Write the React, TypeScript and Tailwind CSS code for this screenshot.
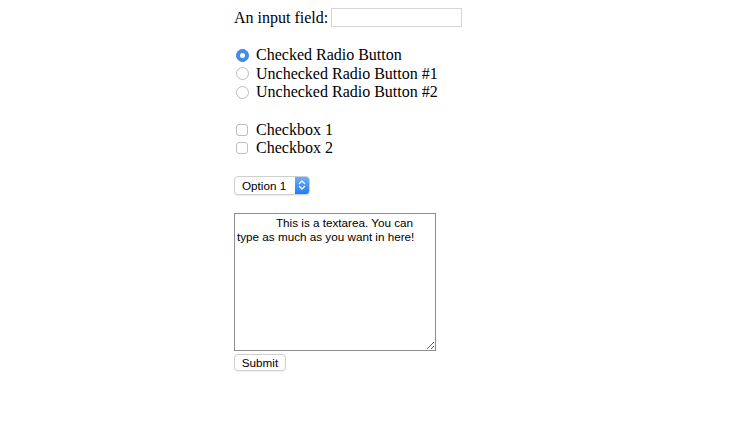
import { useState } from 'react';

const serif = 'font-["Liberation_Serif","Times_New_Roman",serif]';
const sans = 'font-["Liberation_Sans",Arial,sans-serif]';

function Radio({ checked, label }: { checked?: boolean; label: string }) {
  return (
    <label className="flex items-center h-[18.5px]">
      <span
        className={
          checked
            ? 'ml-[2px] w-[13px] h-[13px] rounded-full bg-[#3f8ef3] border border-[#3a86e8] flex items-center justify-center'
            : 'ml-[2px] w-[13px] h-[13px] rounded-full bg-white border border-[#bdbdbd]'
        }
      >
        {checked && <span className="w-[5px] h-[5px] rounded-full bg-white" />}
      </span>
      <span className="ml-[7px]">{label}</span>
    </label>
  );
}

function Checkbox({ label }: { label: string }) {
  return (
    <label className="flex items-center h-[18.5px]">
      <span className="ml-[2px] w-[12px] h-[12px] rounded-[3px] bg-white border border-[#bdbdbd]" />
      <span className="ml-[8px]">{label}</span>
    </label>
  );
}

export default function App() {
  const [text, setText] = useState(
    '            This is a textarea. You can type as much as you want in here!'
  );

  return (
    <div className={`min-h-[425px] bg-white text-black ${serif} text-[16px]`}>
      <div className="mx-auto w-[261px] pt-[8px] flex flex-col items-start">
        <div className="flex items-center h-[19px] leading-[19px]">
          <span>An input field:</span>
          <input
            type="text"
            className="ml-[3px] w-[131px] h-[19px] border border-[#d5d5d5] bg-white outline-none"
          />
        </div>

        <div className="mt-[19px] flex flex-col leading-[18.5px]">
          <Radio checked label="Checked Radio Button" />
          <Radio label="Unchecked Radio Button #1" />
          <Radio label="Unchecked Radio Button #2" />
        </div>

        <div className="mt-[19px] flex flex-col leading-[18.5px]">
          <Checkbox label="Checkbox 1" />
          <Checkbox label="Checkbox 2" />
        </div>

        <div className="mt-[18px] flex h-[19px] w-[76px] rounded-[4px] border border-[#cfcfcf] bg-white overflow-hidden shadow-[0_1px_1px_rgba(0,0,0,0.08)]">
          <span className={`flex-1 pl-[7px] text-[11.7px] leading-[17px] ${sans}`}>Option 1</span>
          <span className="w-[14px] h-full bg-gradient-to-b from-[#6ab0fb] to-[#1f7cf1] flex items-center justify-center">
            <svg width="8" height="12" viewBox="0 0 8 12" fill="none" stroke="white" strokeWidth="1.3" strokeLinecap="round" strokeLinejoin="round">
              <path d="M1.5 4.5 L4 2 L6.5 4.5" />
              <path d="M1.5 7.5 L4 10 L6.5 7.5" />
            </svg>
          </span>
        </div>

        <textarea
          value={text}
          onChange={(e) => setText(e.target.value)}
          spellCheck={false}
          className={`mt-[18px] w-[202px] h-[138px] border border-[#8e8e8e] p-[2px] text-[11.7px] leading-[14px] text-black bg-white outline-none ${sans}`}
        />

        <button
          className={`mt-[3px] w-[52px] h-[17px] rounded-[4px] border border-[#d0d0d0] bg-white text-[11.7px] leading-[15px] ${sans} shadow-[0_1px_1px_rgba(0,0,0,0.06)]`}
        >
          Submit
        </button>
      </div>
    </div>
  );
}
